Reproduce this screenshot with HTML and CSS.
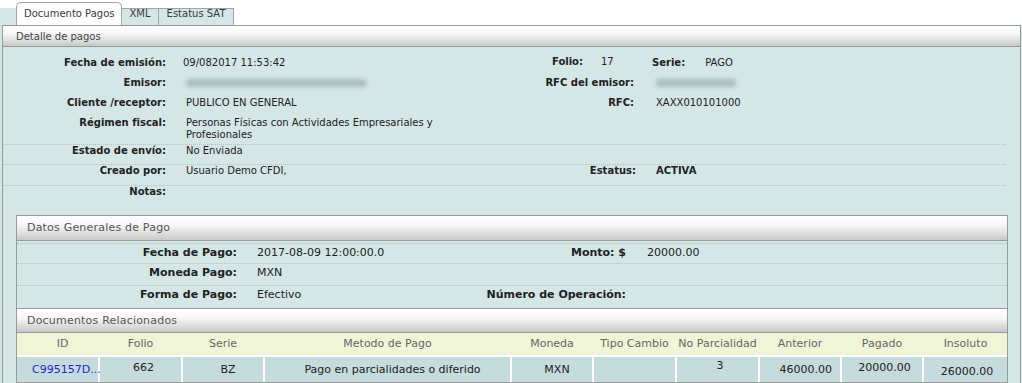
FILE: index.html
```html
<!DOCTYPE html>
<html lang="es">
<head>
<meta charset="utf-8">
<title>Documento Pagos</title>
<link rel="stylesheet" href="styles.css">
</head>
<body>
<div class="tabstrip">
  <span class="tab-spacer"></span>
  <span class="tab active">Documento Pagos</span>
  <span class="tab">XML</span>
  <span class="tab">Estatus SAT</span>
</div>
<div class="frame">
  <div class="panel">
    <div class="panel-head">Detalle de pagos</div>
    <div class="details">
      <div class="drow">
        <span class="lab">Fecha de emisión:</span>
        <span class="val first">09/082017 11:53:42</span>
        <span class="folio-line">
          <span class="lab f-lab">Folio:</span>
          <span class="f-val">17</span>
          <span class="lab">Serie:</span>
          <span class="s-val">PAGO</span>
        </span>
      </div>
      <div class="drow">
        <span class="lab">Emisor:</span>
        <span class="val"><span class="blur blur-emisor"></span></span>
        <span class="lab">RFC del emisor:</span>
        <span class="val2"><span class="blur blur-rfc"></span></span>
      </div>
      <div class="drow">
        <span class="lab">Cliente /receptor:</span>
        <span class="val">PUBLICO EN GENERAL</span>
        <span class="lab">RFC:</span>
        <span class="val2">XAXX010101000</span>
      </div>
      <div class="drow tall sep">
        <span class="lab">Régimen fiscal:</span>
        <span class="val">Personas Físicas con Actividades Empresariales y Profesionales</span>
        <span class="lab"></span>
        <span class="val2"></span>
      </div>
      <div class="drow short sep">
        <span class="lab">Estado de envío:</span>
        <span class="val">No Enviada</span>
        <span class="lab"></span>
        <span class="val2"></span>
      </div>
      <div class="drow wide sep">
        <span class="lab">Creado por:</span>
        <span class="val">Usuario Demo CFDI,</span>
        <span class="lab lab-estatus">Estatus:</span>
        <span class="val2 strong">ACTIVA</span>
      </div>
      <div class="drow">
        <span class="lab">Notas:</span>
        <span class="val"></span>
        <span class="lab"></span>
        <span class="val2"></span>
      </div>
    </div>

    <div class="section">
      <div class="sec-head">Datos Generales de Pago</div>
      <div class="datos">
        <div class="prow r1">
          <span class="plab">Fecha de Pago:</span>
          <span class="pval">2017-08-09 12:00:00.0</span>
          <span class="plab">Monto: $</span>
          <span class="pval2">20000.00</span>
        </div>
        <div class="prow r2">
          <span class="plab">Moneda Pago:</span>
          <span class="pval">MXN</span>
          <span class="plab"></span>
          <span class="pval2"></span>
        </div>
        <div class="prow r3">
          <span class="plab">Forma de Pago:</span>
          <span class="pval">Efectivo</span>
          <span class="plab">Número de Operación:</span>
          <span class="pval2"></span>
        </div>
      </div>
      <div class="sec-head docs">Documentos Relacionados</div>
      <div class="table">
        <div class="thead">
          <span class="h-id">ID</span>
          <span>Folio</span>
          <span>Serie</span>
          <span>Metodo de Pago</span>
          <span>Moneda</span>
          <span>Tipo Cambio</span>
          <span>No Parcialidad</span>
          <span>Anterior</span>
          <span>Pagado</span>
          <span>Insoluto</span>
        </div>
        <div class="trow">
          <span class="c-id">C995157D...</span>
          <span class="c-folio">662</span>
          <span>BZ</span>
          <span>Pago en parcialidades o diferido</span>
          <span>MXN</span>
          <span></span>
          <span class="c-parc">3</span>
          <span class="c-ant">46000.00</span>
          <span class="c-pag">20000.00</span>
          <span class="c-ins">26000.00</span>
        </div>
      </div>
    </div>
  </div>
</div>
</body>
</html>
```
FILE: styles.css
```css
* { box-sizing: border-box; }

body {
  margin: 0;
  background: #ffffff;
  font-family: "DejaVu Sans", Verdana, sans-serif;
  color: #222222;
}

/* Tabs */
.tabstrip {
  display: flex;
  align-items: flex-end;
  height: 25px;
}
.tab-spacer {
  width: 16px;
  height: 17px;
  background: #d5e6e6;
}
.tab {
  height: 17px;
  padding: 0 7px 0 8px;
  border: 1px solid #a3a3a3;
  border-left: 0;
  border-bottom: 0;
  background: #d5e6e6;
  font-size: 10px;
  line-height: 10px;
  color: #3a3a3a;
}
.tab.active {
  height: 23px;
  padding: 0 6px 0 7px;
  border-left: 1px solid #a3a3a3;
  border-radius: 5px 5px 0 0;
  background: #ffffff;
  line-height: 22px;
}

/* Frame */
.frame {
  background: #d5e6e6;
  padding: 0 1px 0 2px;
}
.panel {
  border-left: 1px solid #9a9a9a;
  border-right: 1px solid #9a9a9a;
  background: #d5e6e6;
}
.panel-head {
  height: 22px;
  border-top: 1px solid #9a9a9a;
  border-bottom: 1px solid #9a9a9a;
  background: linear-gradient(#ffffff 0%, #f6f6f6 40%, #c9c9c9 100%);
  padding-left: 13px;
  font-size: 10px;
  line-height: 21px;
  color: #444444;
}

/* Details */
.details {
  padding-top: 10px;
  margin-right: 14px;
  font-size: 10px;
  line-height: 12px;
}
.drow {
  display: grid;
  grid-template-columns: 163px 328px 140px 1fr;
  height: 20px;
}
.drow.tall { height: 28px; }
.drow.short { height: 20px; }
.drow.wide { height: 21px; }
.drow.sep { border-bottom: 1px dotted #b4c2c2; }
.lab {
  font-weight: bold;
  text-align: right;
  color: #222222;
}
.val {
  padding-left: 20px;
  padding-right: 20px;
}
.val.first { padding-left: 17px; }
.val2 { padding-left: 22px; }
.strong { font-weight: bold; }
.lab-estatus { margin-right: -2px; }

.folio-line {
  grid-column: 3 / 5;
  display: flex;
}
.f-lab {
  width: 89px;
  margin-top: -1px;
}
.f-val {
  width: 69px;
  padding-left: 18px;
  margin-top: -1px;
}
.s-val { padding-left: 20px; }

.blur {
  display: inline-block;
  height: 8px;
  margin-top: 2px;
  background: #aabcbc;
  border-radius: 4px;
  filter: blur(2px);
  vertical-align: top;
}
.blur-emisor { width: 181px; }
.blur-rfc { width: 80px; }

/* Sections */
.section {
  margin: 9px 12px 0 13px;
  border: 1px solid #9a9a9a;
  border-bottom: 0;
}
.sec-head {
  height: 25px;
  border-bottom: 1px solid #9a9a9a;
  background: linear-gradient(#ffffff 0%, #f6f6f6 40%, #c9c9c9 100%);
  padding-left: 10px;
  font-size: 11px;
  line-height: 24px;
  letter-spacing: 0.2px;
  color: #555555;
}
.sec-head.docs {
  border-top: 1px solid #9a9a9a;
}
.datos {
  padding-top: 2px;
  font-size: 11px;
  line-height: 13px;
}
.prow {
  display: grid;
  grid-template-columns: 220px 243px 146px 1fr;
  border-top: 1px dotted #b4c2c2;
  padding-top: 2px;
}
.prow.r1 { height: 20px; }
.prow.r2 { height: 22px; }
.prow.r3 { height: 23px; }
.plab {
  font-weight: bold;
  text-align: right;
}
.pval { padding-left: 20px; }
.pval2 { padding-left: 21px; }

/* Table */
.table {
  background: #ffffff;
  border-bottom: 1px solid #9a9a9a;
  font-size: 11px;
}
.thead,
.trow {
  display: grid;
  grid-template-columns: 81px 81px 80px 245px 80px 81px 81px 80px 80px 83px;
  column-gap: 2px;
}
.thead {
  background: #f0f5d8;
  height: 22px;
  line-height: 22px;
  color: #666666;
  text-align: center;
}
.h-id { padding-left: 10px; }
.trow {
  margin-top: 2px;
}
.trow > span {
  height: 25px;
  background: #c5dbdc;
  text-align: center;
  padding-left: 10px;
  line-height: 26px;
  white-space: nowrap;
  color: #222222;
}
.trow > .c-id {
  text-align: left;
  padding-left: 15px;
  color: #1f1fe0;
}
.trow > .c-folio { line-height: 21px; padding-left: 6px; }
.trow > .c-parc { line-height: 17px; padding-left: 5px; }
.trow > .c-ant { text-align: right; padding-right: 8px; }
.trow > .c-pag { line-height: 22px; padding-left: 5px; }
.trow > .c-ins { line-height: 30px; padding-left: 3px; }
```
